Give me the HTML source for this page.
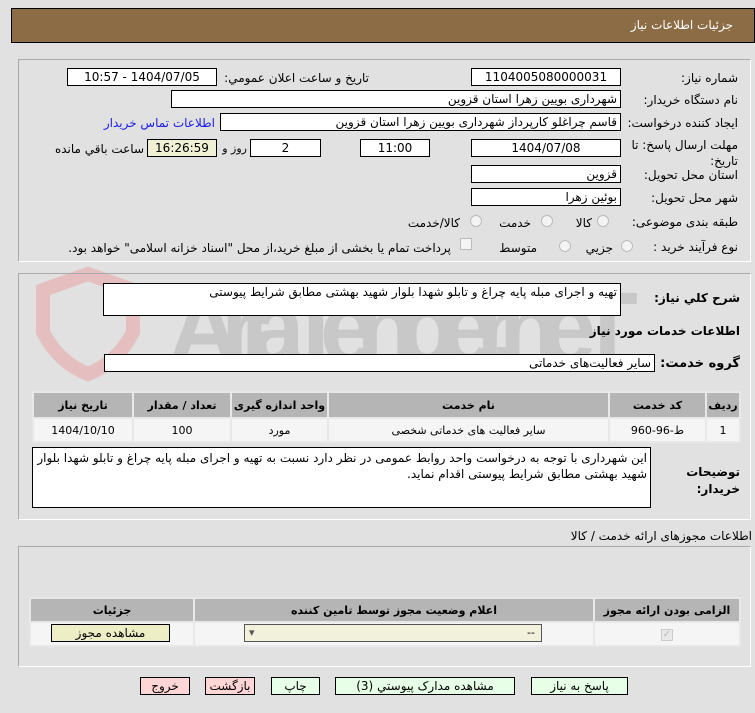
<!DOCTYPE html>
<html><head><meta charset="utf-8"><style>
*{margin:0;padding:0;box-sizing:border-box}
body{width:755px;height:713px;background:#e1e1e1;position:relative;overflow:hidden;font-family:"DejaVu Sans","Liberation Sans",sans-serif;font-size:11px;color:#000}
.a{position:absolute;white-space:nowrap}
.box{position:absolute;background:#fff;border:1px solid #000;height:18px;line-height:16px;font-size:12px;padding:0 3px;direction:rtl;white-space:nowrap;overflow:hidden}
.c{text-align:center}
.lbl{position:absolute;direction:rtl;white-space:nowrap;font-size:12px}
.panel{position:absolute;border:1px solid #aaa;border-right-color:#fff;border-bottom-color:#fff}
.r{position:absolute;width:12px;height:12px;border-radius:50%;border:1px solid #bbb;background:#f4f4f4}
table{position:absolute;border-collapse:collapse;direction:rtl;font-size:11px}
td,th{border:2px solid #e8e8e8;text-align:center}
th{background:#b5b5b5;font-weight:bold}
td{background:#f5f5f5}
.btn{position:absolute;height:18px;border:1px solid #000;text-align:center;line-height:16px;font-size:12px;background:#e6ffe6;direction:rtl}
.pk{background:#ffd6d6}
</style></head><body>
<div class="a" style="left:11px;top:8px;width:744px;height:35px;background:#8b6c44;border:1px solid #000;"></div>
<div class="lbl" style="right:22px;top:18px;color:#fff;font-size:12px">جزئیات اطلاعات نیاز</div>

<svg class="a" style="left:18px;top:262px" width="630" height="130">
<path d="M25 28 L70 12 L115 28 L115 70 Q100 100 70 112 Q40 100 25 70 Z" fill="none" stroke="#e8a8a8" stroke-width="14" opacity="0.6"/>
<text x="150" y="100" font-family="Liberation Sans" font-weight="bold" font-size="100" fill="#9a9a9a" opacity="0.35" textLength="470">AriaTender.neT</text>
</svg>

<div class="panel" style="left:18px;top:59px;width:733px;height:203px"></div>
<div class="lbl" style="right:17px;top:71px">شماره نیاز:</div>
<div class="box c" style="left:471px;top:68px;width:150px">1104005080000031</div>
<div class="lbl" style="right:386px;top:71px">تاریخ و ساعت اعلان عمومي:</div>
<div class="box c" style="left:67px;top:68px;width:150px">1404/07/05 - 10:57</div>

<div class="lbl" style="right:17px;top:93px">نام دستگاه خریدار:</div>
<div class="box" style="left:171px;top:90px;width:450px">شهرداری بویین زهرا استان قزوین</div>

<div class="lbl" style="right:17px;top:116px">ایجاد کننده درخواست:</div>
<div class="box" style="left:220px;top:113px;width:401px">قاسم چراغلو کارپرداز شهرداری بویین زهرا استان قزوین</div>
<div class="lbl" style="right:540px;top:116px;color:#1a1aee">اطلاعات تماس خریدار</div>

<div class="lbl" style="right:17px;top:137px;text-align:right;line-height:16px">مهلت ارسال پاسخ: تا<br>تاریخ:</div>
<div class="box c" style="left:471px;top:139px;width:150px">1404/07/08</div>
<div class="lbl" style="right:324px;top:142px">ساعت</div>
<div class="box c" style="left:360px;top:139px;width:70px">11:00</div>
<div class="box c" style="left:250px;top:139px;width:71px">2</div>
<div class="lbl" style="right:508px;top:142px;font-size:11px">روز و</div>
<div class="box c" style="left:147px;top:139px;width:70px;background:#f0f0d4">16:26:59</div>
<div class="lbl" style="right:611px;top:142px">ساعت باقي مانده</div>

<div class="lbl" style="right:17px;top:168px">استان محل تحویل:</div>
<div class="box" style="left:471px;top:165px;width:150px">قزوین</div>
<div class="lbl" style="right:17px;top:191px">شهر محل تحویل:</div>
<div class="box" style="left:471px;top:188px;width:150px">بوئین زهرا</div>

<div class="lbl" style="right:17px;top:215px">طبقه بندی موضوعی:</div>
<div class="r" style="left:597px;top:215px"></div><div class="lbl" style="right:163px;top:216px">کالا</div>
<div class="r" style="left:541px;top:215px"></div><div class="lbl" style="right:224px;top:216px">خدمت</div>
<div class="r" style="left:470px;top:215px"></div><div class="lbl" style="right:295px;top:216px">کالا/خدمت</div>

<div class="lbl" style="right:17px;top:240px">نوع فرآیند خرید :</div>
<div class="r" style="left:621px;top:240px"></div><div class="lbl" style="right:142px;top:241px">جزيي</div>
<div class="r" style="left:559px;top:240px"></div><div class="lbl" style="right:218px;top:241px">متوسط</div>
<div class="a" style="left:460px;top:238px;width:12px;height:12px;border:1px solid #bbb;background:#f4f4f4"></div>
<div class="lbl" style="right:304px;top:241px">پرداخت تمام یا بخشی از مبلغ خرید،از محل "اسناد خزانه اسلامی" خواهد بود.</div>

<div class="panel" style="left:18px;top:273px;width:733px;height:247px"></div>
<div class="lbl" style="right:15px;top:291px;font-weight:bold">شرح کلي نياز:</div>
<div class="box" style="left:103px;top:283px;width:518px;height:33px">تهیه و اجرای مبله پایه چراغ و تابلو شهدا بلوار شهید بهشتی مطابق شرایط پیوستی</div>
<div class="lbl" style="right:15px;top:324px;font-weight:bold">اطلاعات خدمات مورد نياز</div>
<div class="lbl" style="right:15px;top:356px;font-weight:bold;font-size:13px">گروه خدمت:</div>
<div class="box" style="left:104px;top:354px;width:551px">سایر فعالیت‌های خدماتی</div>

<table style="left:32px;top:391px;width:709px">
<tr style="height:26px"><th style="width:34px">ردیف</th><th style="width:97px">کد خدمت</th><th style="width:281px">نام خدمت</th><th style="width:97px">واحد اندازه گیری</th><th style="width:98px">تعداد / مقدار</th><th>تاریخ نیاز</th></tr>
<tr style="height:24px"><td>1</td><td>ط-96-960</td><td>سایر فعالیت های خدماتی شخصی</td><td>مورد</td><td>100</td><td>1404/10/10</td></tr>
</table>

<div class="lbl" style="right:15px;top:464px;font-weight:bold;font-size:12px;line-height:17px;text-align:right">توضیحات<br>خریدار:</div>
<div class="box" style="left:32px;top:447px;width:619px;height:61px;white-space:normal;line-height:16px;padding-top:2px">این شهرداری با توجه به درخواست واحد روابط عمومی در نظر دارد نسبت به تهیه و اجرای مبله پایه چراغ و تابلو شهدا بلوار شهید بهشتی مطابق شرایط پیوستی اقدام نماید.</div>

<div class="lbl" style="right:3px;top:529px">اطلاعات مجوزهای ارائه خدمت / کالا</div>
<div class="panel" style="left:18px;top:546px;width:733px;height:121px"></div>
<table style="left:29px;top:597px;width:712px">
<tr style="height:24px"><th style="width:146px">الزامی بودن ارائه مجوز</th><th style="width:400px">اعلام وضعیت مجوز توسط تامین کننده</th><th>جزئیات</th></tr>
<tr style="height:24px"><td><span style="display:inline-block;width:12px;height:12px;border:1px solid #ccc;background:#e8e8e8;color:#bbb;font-size:10px;line-height:10px">✓</span></td><td></td><td></td></tr>
</table>
<div class="a" style="left:244px;top:624px;width:298px;height:18px;border:1px solid #555;background:#f2f2dc;font-size:11px;line-height:16px"><span style="position:absolute;left:4px;color:#555">▾</span><span style="position:absolute;right:6px">--</span></div>
<div class="btn" style="left:51px;top:624px;width:119px;background:#eeeec6">مشاهده مجوز</div>

<div class="btn" style="left:531px;top:677px;width:97px">پاسخ به نیاز</div>
<div class="btn" style="left:335px;top:677px;width:180px">مشاهده مدارک پیوستي (3)</div>
<div class="btn" style="left:271px;top:677px;width:49px">چاپ</div>
<div class="btn pk" style="left:205px;top:677px;width:50px">بازگشت</div>
<div class="btn pk" style="left:140px;top:677px;width:50px">خروج</div>
</body></html>
